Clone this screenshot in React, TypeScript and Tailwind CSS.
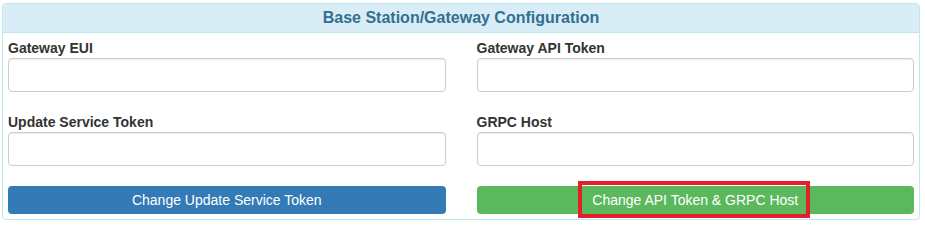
import React from 'react';

const fields = [
  { label: 'Gateway EUI' },
  { label: 'Gateway API Token' },
  { label: 'Update Service Token' },
  { label: 'GRPC Host' },
];

function Field({ label }: { label: string }) {
  return (
    <div className="flex flex-col">
      <label className="text-[14px] leading-[20px] font-bold text-[#333333]">{label}</label>
      <input
        type="text"
        className="h-[34px] w-full rounded-[4px] border border-[#cccccc] bg-white px-3 shadow-[inset_0_1px_1px_rgba(0,0,0,0.075)] outline-none"
      />
    </div>
  );
}

export default function App() {
  return (
    <div className="h-[224px] w-[925px] bg-white pt-[3px] pl-[2px]" style={{ fontFamily: '"Liberation Sans", Arial, sans-serif' }}>
      <div className="w-[918px] rounded-[4px] border border-[#bce8f1] bg-white">
        <div className="flex h-[29px] items-center justify-center rounded-t-[3px] border-b border-[#bce8f1] bg-[#d9edf7] pb-[1px] text-[16px] font-bold text-[#31708f]">
          Base Station/Gateway Configuration
        </div>
        <div className="grid grid-cols-2 gap-x-[31px] gap-y-[20px] px-[5px] pt-[5px] pb-[5px]">
          {fields.map((f) => (
            <Field key={f.label} label={f.label} />
          ))}
          <button className="h-[28px] rounded-[4px] bg-[#337ab7] text-[14px] text-white">
            Change Update Service Token
          </button>
          <div className="relative">
            <button className="h-[28px] w-full rounded-[4px] bg-[#5cb85c] text-[14px] text-white">
              Change API Token &amp; GRPC Host
            </button>
            <div className="pointer-events-none absolute top-[-5px] left-[101px] h-[37px] w-[232px] border-[4px] border-[#e3202a]" />
          </div>
        </div>
      </div>
    </div>
  );
}
